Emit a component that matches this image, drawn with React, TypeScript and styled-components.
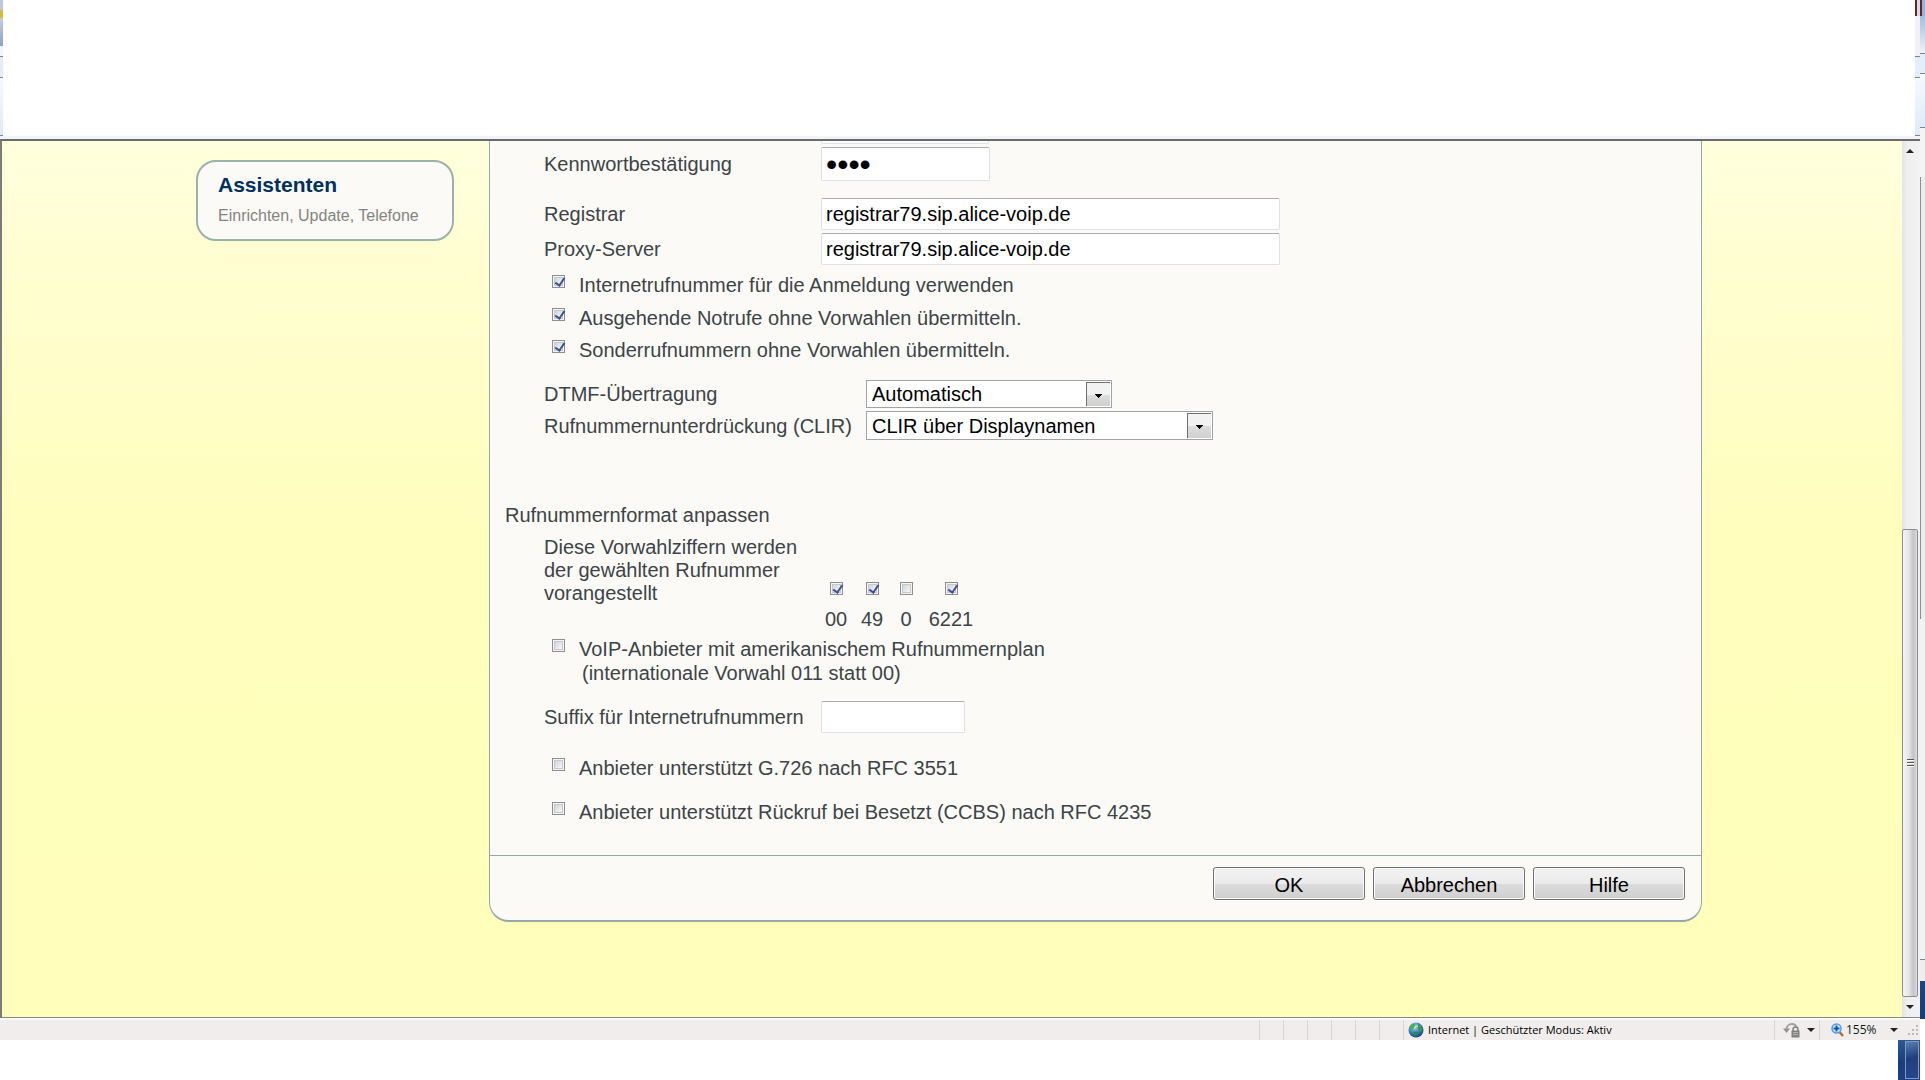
import React from 'react';
import styled, { createGlobalStyle } from 'styled-components';

const Global = createGlobalStyle`
  * { box-sizing: border-box; }
  html, body { margin: 0; background: #fff; }
  body { overflow: hidden; }
  body, input, select, button { font-family: "Liberation Sans", Arial, sans-serif; font-size: 20px; line-height: 24px; }
`;

const Screen = styled.div`
  min-height: 100vh;
  display: grid;
  grid-template-columns: minmax(0, 1fr) 5px;
  background: #fff;
`;

const Desktop = styled.div`
  display: flex;
  flex-direction: column;
  min-width: 0;
`;

const Chrome = styled.header`
  height: 139px;
  display: flex;
  justify-content: space-between;
  background: #fff;
  border-bottom: 3px solid #f1f4f8;
`;

const ChromeEdge = styled.div<{ $wide?: boolean }>`
  width: ${(p) => (p.$wide ? 5 : 3)}px;
  display: flex;
  flex-direction: column;
`;

const EdgePart = styled.div<{ $h: number; $bg: string; $line?: boolean }>`
  height: ${(p) => p.$h}px;
  background: ${(p) => p.$bg};
  border-bottom: ${(p) => (p.$line ? '1px solid #7e858c' : '0')};
`;

const Viewport = styled.div`
  flex: 1;
  display: flex;
  border-top: 2px solid #6b6b6b;
  border-left: 2px solid #7b7b7b;
  border-bottom: 1px solid #85898c;
`;

const Page = styled.main`
  flex: 1;
  display: grid;
  grid-template-columns: 258px minmax(0, 1213px);
  column-gap: 35px;
  align-items: start;
  padding: 0 199px 95px 194px;
  background: linear-gradient(#ffffdd 0, #fffed2 110px, #fffebc 400px, #ffffbb 100%);
`;

const Card = styled.a`
  display: block;
  margin-top: 19px;
  padding: 11px 20px;
  height: 81px;
  border: 2px solid #9bb2ae;
  border-radius: 20px;
  background: #fbfaf7;
  text-decoration: none;
`;

const CardTitle = styled.strong`
  display: block;
  font-size: 21px;
  line-height: 24px;
  color: #00305e;
`;

const CardText = styled.span`
  display: block;
  margin-top: 9px;
  font-size: 16px;
  line-height: 20px;
  color: #85857f;
`;

const Panel = styled.form`
  height: 781px;
  border: 1px solid #93a9a6;
  border-top: 0;
  border-bottom-width: 2px;
  border-radius: 0 0 20px 20px;
  background: #fbfaf6;
  color: #3d4448;
  overflow: hidden;
  display: flex;
  flex-direction: column;
`;

const Fields = styled.div`
  flex: 1;
  padding-left: 54px;
  display: flex;
  flex-direction: column;
  align-items: flex-start;
`;

const Row = styled.div<{ $top?: number; $col?: number }>`
  display: grid;
  grid-template-columns: ${(p) => p.$col ?? 277}px auto;
  align-items: center;
  margin-top: ${(p) => p.$top ?? 0}px;
`;

const Field = styled.input<{ $w: number; $h?: number }>`
  width: ${(p) => p.$w}px;
  height: ${(p) => p.$h ?? 32}px;
  padding: 0 4px;
  border: 1px solid #dfe1e6;
  border-top-color: #abadb3;
  border-radius: 2px;
  background: #fff;
  color: #000;
  outline: 0;
  &[type="password"] {
    font-size: 32px;
  }
`;

const CutField = styled.div`
  width: 168px;
  height: 3px;
  margin-left: 277px;
  border: 1px solid #dfe1e6;
  border-top: 0;
  border-radius: 0 0 2px 2px;
  background: #fff;
`;

const Check = styled.label<{ $top?: number }>`
  display: grid;
  grid-template-columns: 13px auto;
  column-gap: 14px;
  align-items: start;
  margin: ${(p) => p.$top ?? 0}px 0 0 8px;
`;

const CheckText = styled.span`
  margin-top: -2px;
`;

const SecondLine = styled.span`
  display: block;
  padding-left: 3px;
`;

const Box = styled.input.attrs({ type: 'checkbox' })`
  appearance: none;
  display: grid;
  width: 13px;
  height: 13px;
  margin: 0;
  border: 1px solid #8e8f8f;
  background: linear-gradient(135deg, #c6cbd2, #f6f6f6 80%);
  box-shadow: inset 0 0 0 1px #f4f4f4, inset 0 0 0 2px #c5c9cf;
  &:checked::after {
    content: "";
    width: 4px;
    height: 8px;
    margin: 0 0 0 4px;
    border: solid #3c4f96;
    border-width: 0 2px 2px 0;
    transform: rotate(35deg);
  }
`;

const Combo = styled.select<{ $w: number; $h: number }>`
  appearance: none;
  width: ${(p) => p.$w}px;
  height: ${(p) => p.$h}px;
  padding: 0 30px 0 5px;
  border: 1px solid #a0a3a8;
  border-radius: 0;
  color: #000;
  background:
    linear-gradient(#000, #000) right 9px top 13px / 7px 1px no-repeat,
    linear-gradient(#000, #000) right 10px top 14px / 5px 1px no-repeat,
    linear-gradient(#000, #000) right 11px top 15px / 3px 1px no-repeat,
    linear-gradient(#000, #000) right 12px top 16px / 1px 1px no-repeat,
    linear-gradient(#f2f2f2 0 50%, #dedede 50%, #cfcfcf) right 1px top 2px / 23px calc(100% - 3px) no-repeat,
    linear-gradient(#707070, #707070) right 1px top 1px / 24px calc(100% - 2px) no-repeat,
    #fff;
`;

const Heading = styled.h2`
  margin: 63px 0 0 -39px;
  font-size: 20px;
  line-height: 24px;
  font-weight: 400;
`;

const Prefixes = styled.div`
  display: flex;
  align-items: flex-end;
  margin-top: 9px;
`;

const PrefixText = styled.span`
  width: 281px;
  padding-bottom: 26px;
  line-height: 23px;
`;

const PrefixGrid = styled.div`
  display: grid;
  grid-template-columns: 22px 22px 18px 44px;
  column-gap: 14px;
`;

const Prefix = styled.label`
  display: flex;
  flex-direction: column;
  align-items: center;
  row-gap: 12px;
`;

const Actions = styled.footer`
  display: flex;
  justify-content: flex-end;
  gap: 8px;
  padding: 11px 16px 20px;
  border-top: 1px solid #93a9a6;
`;

const Button = styled.button`
  width: 152px;
  height: 33px;
  padding: 2px 0 0;
  border: 1px solid #707070;
  border-radius: 3px;
  background: linear-gradient(#f2f2f2 0, #ebebeb 50%, #dcdcdc 51%, #cfcfcf);
  box-shadow: inset 0 0 0 1px #fbfbfb;
  color: #000;
`;

const ScrollBar = styled.div`
  width: 18px;
  display: flex;
  flex-direction: column;
  align-items: center;
  justify-content: space-between;
  padding-right: 2px;
  background: linear-gradient(90deg, #e4e4e4, #efefef 30%, #f2f2f2);
`;

const ArrowButton = styled.button`
  width: 16px;
  height: 20px;
  padding: 0;
  border: 0;
  background: transparent;
  display: grid;
  place-items: center;
`;

const Track = styled.div`
  flex: 1;
  width: 100%;
  display: flex;
  flex-direction: column;
`;

const Gap = styled.div`
  flex: 368;
`;

const Thumb = styled.div`
  flex: 467;
  border: 1px solid #8e8e8e;
  border-radius: 2px;
  background: linear-gradient(90deg, #f5f5f5, #e6e6e8 40%, #c4c4c8 75%, #dcdcde);
  display: flex;
  flex-direction: column;
  align-items: center;
  justify-content: center;
  gap: 1px;
`;

const Grip = styled.span`
  width: 7px;
  height: 2px;
  border-top: 1px solid #555;
  background: #fff;
`;

const StatusBar = styled.footer`
  height: 22px;
  display: flex;
  align-items: stretch;
  justify-content: flex-end;
  border-top: 2px solid #fafafa;
  background: #f0edec;
  color: #1a1a1a;
  font-family: "Open Sans", "Noto Sans", sans-serif;
  line-height: 20px;
  svg { flex: none; }
`;

const Cell = styled.div`
  width: 24px;
  display: flex;
  align-items: center;
  border-left: 1px solid #d8d5d4;
  white-space: nowrap;
`;

const ZoneCell = styled(Cell)`
  width: 371px;
  gap: 4px;
  padding-left: 4px;
  font-size: 11px;
  color: #000;
`;

const PrivacyCell = styled(Cell)`
  width: 45px;
  gap: 7px;
  padding-left: 8px;
`;

const ZoomCell = styled(Cell)`
  width: 101px;
  gap: 2px;
  padding-left: 11px;
  font-size: 12px;
`;

const ZoomArrow = styled.span`
  flex: 1;
  display: flex;
  justify-content: flex-end;
  padding-right: 8px;
`;

const TaskStrip = styled.div`
  height: 40px;
  display: flex;
  justify-content: flex-end;
`;

const TaskEnd = styled.div`
  width: 22px;
  padding: 1px 1px 1px 7px;
  background: linear-gradient(#2d5796, #1c3a78 60%, #1d3f86);
`;

const ShowDesktop = styled.button`
  display: block;
  width: 100%;
  height: 100%;
  padding: 0;
  border: 1px solid #7d98c2;
  background: linear-gradient(165deg, #5a7db0, #1f3f7b 45%, #24488f);
`;

const Behind = styled.div`
  display: flex;
  flex-direction: column;
`;

const Triangle = ({ up = false }: { up?: boolean }) => (
  <svg width="8" height="4" viewBox="0 0 8 4" aria-hidden="true">
    <path d={up ? 'M0 4 4 0 8 4z' : 'M0 0h8L4 4z'} fill="#222" />
  </svg>
);

const Globe = () => (
  <svg width="16" height="16" viewBox="0 0 16 16" aria-hidden="true">
    <defs>
      <radialGradient id="sea" cx="0.4" cy="0.3" r="0.75">
        <stop offset="0" stopColor="#b4def8" />
        <stop offset="0.5" stopColor="#3a86cc" />
        <stop offset="1" stopColor="#123a7c" />
      </radialGradient>
    </defs>
    <circle cx="8" cy="8" r="7.5" fill="url(#sea)" />
    <path d="M2 4 5 1.500 7.500 2.500 7 5 5 6.500 5.500 9 3.500 8.500 1.500 6z" fill="#4fae4a" />
    <path d="M10 2.500 13 4 14.500 8 12.500 10 10.500 8 9.500 5z" fill="#3f9b3c" />
    <path d="M6 9.500 9.500 10 9 13.500 7 14.500 5.500 12z" fill="#2f8a38" />
    <path d="M6 5.500C8 4 9 4 10 4.500" stroke="#e6f6ff" fill="none" />
  </svg>
);

const PrivacyLock = () => (
  <svg width="17" height="16" viewBox="0 0 17 16" aria-hidden="true">
    <path d="M0 6.500h7L3.500 11z" fill="#8f8f8f" />
    <path d="M3.500 7.500C3.500 4 6 2 9 2c2.500 0 4 1.500 4.500 3.500" fill="none" stroke="#a2a2a2" strokeWidth="2" />
    <path d="M10 9V7.500a2.500 2.500 0 0 1 5 0V9" fill="none" stroke="#858585" strokeWidth="1.500" />
    <rect x="8.500" y="8.500" width="8" height="7" fill="#808080" />
    <path d="M10 10.500h5M10 12.500h5" stroke="#b4b4b4" />
  </svg>
);

const Magnifier = () => (
  <svg width="13" height="14" viewBox="0 0 13 14" aria-hidden="true">
    <path d="M8.500 9 12 13" stroke="#a9713f" strokeWidth="2.500" />
    <circle cx="5.500" cy="5.500" r="4.500" fill="#d4ecff" stroke="#5a9bd8" strokeWidth="1.500" />
    <path d="M5.500 2.500v6M2.500 5.500h6" stroke="#0c56b4" strokeWidth="2" />
  </svg>
);

const ResizeGrip = () => (
  <svg width="12" height="12" viewBox="0 0 12 12" aria-hidden="true">
    <path d="M8 1h2v2H8zM4 5h2v2H4zM8 5h2v2H8zM0 9h2v2H0zM4 9h2v2H4zM8 9h2v2H8z" fill="#bcb9b8" />
  </svg>
);

export default function App() {
  return (
    <>
      <Global />
      <Screen>
        <Desktop>
          <Chrome>
            <ChromeEdge>
              <EdgePart $h={10} $bg="#b9c8dc" />
              <EdgePart $h={8} $bg="#d9b93c" />
              <EdgePart $h={28} $bg="linear-gradient(#c3cde0, #8ea3c8)" />
              <EdgePart $h={11} $bg="#f3f6fa" $line />
              <EdgePart $h={21} $bg="#e3eefa" $line />
              <EdgePart $h={58} $bg="linear-gradient(#f5f9fd, #dfebf8)" $line />
            </ChromeEdge>
            <ChromeEdge $wide>
              <EdgePart $h={16} $bg="linear-gradient(90deg, #5a2a2a 40%, #d9dce4 40%)" />
              <EdgePart $h={41} $bg="#f0f2f6" $line />
              <EdgePart $h={21} $bg="#e3eefa" $line />
              <EdgePart $h={58} $bg="linear-gradient(#f5f9fd, #dfebf8)" $line />
            </ChromeEdge>
          </Chrome>
          <Viewport>
            <Page>
              <Card href="#assistenten">
                <CardTitle>Assistenten</CardTitle>
                <CardText>Einrichten, Update, Telefone</CardText>
              </Card>
              <Panel onSubmit={(e) => e.preventDefault()}>
                <Fields>
                  <CutField />
                  <Row $top={3}>
                    <label htmlFor="pw">Kennwortbestätigung</label>
                    <Field id="pw" type="password" defaultValue="1234" $w={169} $h={34} />
                  </Row>
                  <Row $top={17}>
                    <label htmlFor="registrar">Registrar</label>
                    <Field id="registrar" defaultValue="registrar79.sip.alice-voip.de" $w={459} />
                  </Row>
                  <Row $top={3}>
                    <label htmlFor="proxy">Proxy-Server</label>
                    <Field id="proxy" defaultValue="registrar79.sip.alice-voip.de" $w={459} />
                  </Row>
                  <Check $top={10}>
                    <Box defaultChecked />
                    <CheckText>Internetrufnummer für die Anmeldung verwenden</CheckText>
                  </Check>
                  <Check $top={11}>
                    <Box defaultChecked />
                    <CheckText>Ausgehende Notrufe ohne Vorwahlen übermitteln.</CheckText>
                  </Check>
                  <Check $top={10}>
                    <Box defaultChecked />
                    <CheckText>Sonderrufnummern ohne Vorwahlen übermitteln.</CheckText>
                  </Check>
                  <Row $top={18} $col={322}>
                    <label htmlFor="dtmf">DTMF-Übertragung</label>
                    <Combo id="dtmf" $w={246} $h={28}>
                      <option>Automatisch</option>
                    </Combo>
                  </Row>
                  <Row $top={3} $col={322}>
                    <label htmlFor="clir">Rufnummernunterdrückung (CLIR)</label>
                    <Combo id="clir" $w={347} $h={29}>
                      <option>CLIR über Displaynamen</option>
                    </Combo>
                  </Row>
                  <Heading>Rufnummernformat anpassen</Heading>
                  <Prefixes>
                    <PrefixText>
                      Diese Vorwahlziffern werden<br />der gewählten Rufnummer<br />vorangestellt
                    </PrefixText>
                    <PrefixGrid>
                      <Prefix><Box defaultChecked />00</Prefix>
                      <Prefix><Box defaultChecked />49</Prefix>
                      <Prefix><Box />0</Prefix>
                      <Prefix><Box defaultChecked />6221</Prefix>
                    </PrefixGrid>
                  </Prefixes>
                  <Check $top={8}>
                    <Box />
                    <CheckText>
                      VoIP-Anbieter mit amerikanischem Rufnummernplan
                      <SecondLine>(internationale Vorwahl 011 statt 00)</SecondLine>
                    </CheckText>
                  </Check>
                  <Row $top={16}>
                    <label htmlFor="suffix">Suffix für Internetrufnummern</label>
                    <Field id="suffix" $w={144} />
                  </Row>
                  <Check $top={25}>
                    <Box />
                    <CheckText>Anbieter unterstützt G.726 nach RFC 3551</CheckText>
                  </Check>
                  <Check $top={22}>
                    <Box />
                    <CheckText>Anbieter unterstützt Rückruf bei Besetzt (CCBS) nach RFC 4235</CheckText>
                  </Check>
                </Fields>
                <Actions>
                  <Button type="submit">OK</Button>
                  <Button type="button">Abbrechen</Button>
                  <Button type="button">Hilfe</Button>
                </Actions>
              </Panel>
            </Page>
            <ScrollBar>
              <ArrowButton type="button" aria-label="Nach oben"><Triangle up /></ArrowButton>
              <Track>
                <Gap />
                <Thumb><Grip /><Grip /><Grip /></Thumb>
              </Track>
              <ArrowButton type="button" aria-label="Nach unten"><Triangle /></ArrowButton>
            </ScrollBar>
          </Viewport>
          <StatusBar>
            <Cell /><Cell /><Cell /><Cell /><Cell /><Cell />
            <ZoneCell><Globe />Internet | Geschützter Modus: Aktiv</ZoneCell>
            <PrivacyCell><PrivacyLock /><Triangle /></PrivacyCell>
            <ZoomCell><Magnifier />155%<ZoomArrow><Triangle /></ZoomArrow><ResizeGrip /></ZoomCell>
          </StatusBar>
          <TaskStrip>
            <TaskEnd><ShowDesktop type="button" aria-label="Desktop anzeigen" /></TaskEnd>
          </TaskStrip>
        </Desktop>
        <Behind>
          <EdgePart $h={16} $bg="linear-gradient(90deg, #5a2a2a 40%, #9fb2d6 40%)" />
          <EdgePart $h={38} $bg="linear-gradient(#a9bbdc, #f0f2f6)" $line />
          <EdgePart $h={20} $bg="#e3eefa" $line />
          <EdgePart $h={54} $bg="linear-gradient(#f5f9fd, #dfebf8)" $line />
          <EdgePart $h={49} $bg="#f4f4f4" />
          <EdgePart $h={442} $bg="linear-gradient(90deg, #8e8e8e 30%, #ececec 30%)" />
          <EdgePart $h={341} $bg="#f2f2f2" $line />
          <EdgePart $h={21} $bg="#f0edec" />
          <EdgePart $h={38} $bg="linear-gradient(#20447f, #1c3a78)" />
        </Behind>
      </Screen>
    </>
  );
}
